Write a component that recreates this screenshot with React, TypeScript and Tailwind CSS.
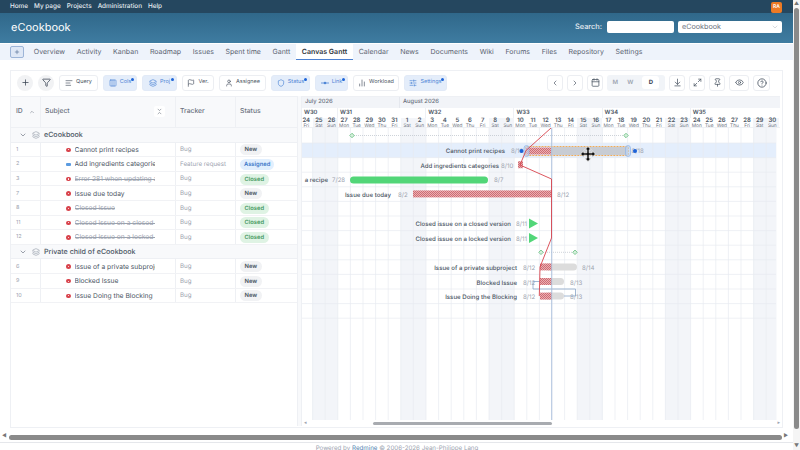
import React from "react";
import {
  ArrowDownToLine,
  Calendar,
  ChartNoAxesColumn,
  ChevronDown,
  ChevronLeft,
  ChevronRight,
  ChevronUp,
  ChevronsDownUp,
  CircleHelp,
  Columns3,
  Eye,
  Flag,
  Funnel,
  Layers,
  AlignLeft,
  Maximize2,
  Pin,
  Plus,
  Shield,
  SlidersHorizontal,
  User,
} from "lucide-react";

const topLinks = ["Home", "My page", "Projects", "Administration", "Help"];
const tabs = ["Overview", "Activity", "Kanban", "Roadmap", "Issues", "Spent time", "Gantt", "Canvas Gantt", "Calendar", "News", "Documents", "Wiki", "Forums", "Files", "Repository", "Settings"];

type Row = { id?: string; subject: string; tracker?: string; status?: string; closed?: boolean; group?: boolean };

const rows: Row[] = [
  { subject: "eCookbook", group: true },
  { id: "1", subject: "Cannot print recipes", tracker: "Bug", status: "New" },
  { id: "2", subject: "Add ingredients categories", tracker: "Feature request", status: "Assigned" },
  { id: "3", subject: "Error 281 when updating a recipe", tracker: "Bug", status: "Closed", closed: true },
  { id: "7", subject: "Issue due today", tracker: "Bug", status: "New" },
  { id: "8", subject: "Closed issue", tracker: "Bug", status: "Closed", closed: true },
  { id: "11", subject: "Closed issue on a closed version", tracker: "Bug", status: "Closed", closed: true },
  { id: "12", subject: "Closed issue on a locked version", tracker: "Bug", status: "Closed", closed: true },
  { subject: "Private child of eCookbook", group: true },
  { id: "6", subject: "Issue of a private subproject", tracker: "Bug", status: "New" },
  { id: "9", subject: "Blocked Issue", tracker: "Bug", status: "New" },
  { id: "10", subject: "Issue Doing the Blocking", tracker: "Bug", status: "New" },
];

const weekdays = ["Fri", "Sat", "Sun", "Mon", "Tue", "Wed", "Thu"];
const days = Array.from({ length: 38 }, (_, i) => ({
  n: i < 8 ? 24 + i : i - 7,
  wd: weekdays[i % 7],
  weekend: i % 7 === 1 || i % 7 === 2,
}));

const COL = 12.6;
const rowY = (i: number) => 135.5 + i * 14.6;

function StatusPill({ status }: { status?: string }) {
  if (status === "Assigned") return <span className="rounded-full bg-[#e1effe] px-[4px] py-[2px] text-[5.8px] font-semibold leading-[7px] text-[#3b78c9]">Assigned</span>;
  if (status === "Closed") return <span className="rounded-full bg-[#dff3e4] px-[4.5px] py-[2px] text-[5.8px] font-semibold leading-[7px] text-[#45985f]">Closed</span>;
  return <span className="rounded-full bg-[#f1f2f4] px-[4.5px] py-[2px] text-[5.8px] font-semibold leading-[7px] text-[#4b5563]">New</span>;
}

function ToolButton({ icon, label, active, w }: { icon: React.ReactNode; label: string; active?: boolean; w: string }) {
  return (
    <div className={`relative flex h-[16px] items-center justify-center gap-[3px] rounded-[3px] border text-[5.5px] ${w} ${active ? "border-[#e2eaf7] bg-[#e4edfa] text-[#4f86d6]" : "border-[#eceef2] bg-white text-[#4b5563]"}`}>
      {icon}
      <span>{label}</span>
      {active && <span className="absolute right-[2px] top-[2px] h-[3px] w-[3px] rounded-full bg-[#1d63d8]" />}
    </div>
  );
}

function IconBox({ children, w = "w-[16px]" }: { children: React.ReactNode; w?: string }) {
  return <div className={`flex h-[16px] items-center justify-center rounded-[3px] border border-[#eceef2] bg-white text-[#4b5563] ${w}`}>{children}</div>;
}

function LinkGlyph() {
  return (
    <svg width="8" height="8" viewBox="0 0 8 8">
      <path d="M0 4h8" stroke="#4f86d6" strokeWidth="0.8" />
      <circle cx="4" cy="4" r="1.3" fill="#4f86d6" />
    </svg>
  );
}

function Label({ x, y, anchor = "end", dark, children }: { x: number; y: number; anchor?: "start" | "end"; dark?: boolean; children: React.ReactNode }) {
  return (
    <text x={x} y={y + 3} textAnchor={anchor} fontSize="6.1" fontWeight={dark ? 500 : 400} fill={dark ? "#4b5563" : "#9ca3af"} fontFamily="Inter, sans-serif">
      {children}
    </text>
  );
}

function Hatch({ x, y, w }: { x: number; y: number; w: number }) {
  return <rect x={x} y={y - 3.5} width={w} height={7} fill="url(#hatch)" />;
}

function Milestone({ x, y }: { x: number; y: number }) {
  return <rect x={x - 1.6} y={y - 1.6} width={3.2} height={3.2} fill="#d6f0dc" stroke="#6cc084" strokeWidth="0.8" transform={`rotate(45 ${x} ${y})`} />;
}

function GanttCanvas() {
  return (
    <svg width="478" height="292" viewBox="302 128 478 292" className="block">
      <defs>
        <pattern id="hatch" width="2" height="2" patternUnits="userSpaceOnUse">
          <rect width="2" height="2" fill="#e9b0b3" />
          <rect width="1" height="1" fill="#cf6b72" />
          <rect x="1" y="1" width="1" height="1" fill="#cf6b72" />
        </pattern>
      </defs>
      {days.map((d, i) =>
        d.weekend ? <rect key={i} x={300 + COL * i} y={128} width={COL} height={294} fill="#f3f5f9" /> : null
      )}
      <rect x={302} y={143} width={474} height={14.6} fill="#e4eefc" />
      {days.map((_, i) => (
        <line key={i} x1={300 + COL * i} x2={300 + COL * i} y1={128} y2={420} stroke="#e8ebf1" strokeWidth="0.7" />
      ))}
      {Array.from({ length: 13 }, (_, i) => (
        <line key={i} x1={302} x2={776} y1={143 + i * 14.6} y2={143 + i * 14.6} stroke="#e8ebf1" strokeWidth="0.7" />
      ))}
      <rect x={776.5} y={128} width={4} height={292} fill="#ffffff" />

      <line x1={352} x2={626} y1={rowY(0)} y2={rowY(0)} stroke="#b9c0c9" strokeWidth="0.7" strokeDasharray="1 1" />
      <Milestone x={352} y={rowY(0)} />
      <Milestone x={626} y={rowY(0)} />
      <line x1={541} x2={575} y1={rowY(8)} y2={rowY(8)} stroke="#b9c0c9" strokeWidth="0.7" strokeDasharray="1 1" />
      <Milestone x={541} y={rowY(8)} />
      <Milestone x={575} y={rowY(8)} />

      {/* row 1 */}
      <rect x={551} y={147} width={77} height={8} fill="#c8ccd3" />
      <Hatch x={526} y={151} w={25} />
      <rect x={525.5} y={146.5} width={103} height={9} rx="1" fill="none" stroke="#f29a2e" strokeWidth="0.8" strokeDasharray="2 1" />
      <rect x={524} y={145.5} width={5} height={11} rx="2.5" fill="#bcd3f3" fillOpacity="0.6" stroke="#8fb4ea" strokeWidth="0.7" />
      <rect x={625.5} y={145.5} width={5} height={11} rx="2.5" fill="#bcd3f3" fillOpacity="0.6" stroke="#8fb4ea" strokeWidth="0.7" />
      <Label x={505} y={rowY(1)} dark>Cannot print recipes</Label>
      <Label x={511} y={rowY(1)} anchor="start">8/10</Label>
      <Label x={631.5} y={rowY(1)} anchor="start">8/18</Label>
      <circle cx={521.5} cy={151} r={2} fill="#1d63d8" />
      <circle cx={635} cy={151} r={2} fill="#1d63d8" />

      {/* row 2 */}
      <Hatch x={518} y={rowY(2)} w={5} />
      <Label x={499} y={rowY(2)} dark>Add ingredients categories</Label>
      <Label x={501} y={rowY(2)} anchor="start">8/10</Label>

      {/* row 3 */}
      <rect x={350} y={176.5} width={138} height={7} rx="3.5" fill="#52d678" />
      <Label x={328} y={rowY(3)} dark>a recipe</Label>
      <Label x={332} y={rowY(3)} anchor="start">7/28</Label>
      <Label x={494} y={rowY(3)} anchor="start">8/7</Label>

      {/* row 4 */}
      <Hatch x={413} y={rowY(4)} w={138} />
      <Label x={391} y={rowY(4)} dark>Issue due today</Label>
      <Label x={398} y={rowY(4)} anchor="start">8/2</Label>
      <Label x={557} y={rowY(4)} anchor="start">8/12</Label>

      {/* closed versions */}
      <polygon points="529,218.5 538,223.5 529,228.5" fill="#52d678" />
      <Label x={511} y={rowY(6)} dark>Closed issue on a closed version</Label>
      <Label x={516} y={rowY(6)} anchor="start">8/11</Label>
      <polygon points="529,233 538,238 529,243" fill="#52d678" />
      <Label x={511} y={rowY(7)} dark>Closed issue on a locked version</Label>
      <Label x={516} y={rowY(7)} anchor="start">8/11</Label>

      {/* private child */}
      <rect x={545} y={263.5} width={32} height={7} rx="3.5" fill="#dcdcdc" />
      <Hatch x={540} y={rowY(9)} w={12} />
      <Label x={517} y={rowY(9)} dark>Issue of a private subproject</Label>
      <Label x={523} y={rowY(9)} anchor="start">8/12</Label>
      <Label x={582} y={rowY(9)} anchor="start">8/14</Label>

      <rect x={545} y={278} width={19} height={7} rx="3.5" fill="#dcdcdc" />
      <Hatch x={540} y={rowY(10)} w={12} />
      <Label x={517} y={rowY(10)} dark>Blocked Issue</Label>
      <Label x={523} y={rowY(10)} anchor="start">8/12</Label>
      <Label x={570} y={rowY(10)} anchor="start">8/13</Label>

      <rect x={545} y={292.5} width={19} height={7} rx="3.5" fill="#dcdcdc" />
      <Hatch x={540} y={rowY(11)} w={12} />
      <Label x={517} y={rowY(11)} dark>Issue Doing the Blocking</Label>
      <Label x={523} y={rowY(11)} anchor="start">8/12</Label>
      <Label x={570} y={rowY(11)} anchor="start">8/13</Label>

      <path d="M540 281.5H533V289H575.5V296H564" fill="none" stroke="#8aa6c8" strokeWidth="0.8" />
      <line x1={551.7} x2={551.7} y1={128} y2={420} stroke="#a9bfdc" strokeWidth="0.9" />
      <path d="M551 128L526 150.5L520 165L551.5 179V238L540 267L539.3 296" fill="none" stroke="#d8434c" strokeWidth="0.9" />

      {/* move cursor */}
      <g transform="translate(588 154)">
        <path d="M0-7.5L3.2-4.2H1.2V-1.2H4.2V-3.2L7.5 0L4.2 3.2V1.2H1.2V4.2H3.2L0 7.5L-3.2 4.2H-1.2V1.2H-4.2V3.2L-7.5 0L-4.2-3.2V-1.2H-1.2V-4.2H-3.2Z" fill="#111111" stroke="#ffffff" strokeWidth="0.8" />
      </g>
    </svg>
  );
}

export default function App() {
  return (
    <div className="relative flex h-[450px] w-[800px] flex-col overflow-hidden bg-white font-['Inter',sans-serif] [text-rendering:geometricPrecision]">
      <div className="flex h-[13px] shrink-0 items-center justify-between bg-[#25475f] pl-[10px] pr-[18px]">
        <div className="flex gap-[6px] pt-[1px] text-[6.4px] font-medium text-[#e6edf2]">
          {topLinks.map((l) => <span key={l}>{l}</span>)}
        </div>
        <div className="mt-[2px] flex h-[11px] w-[11px] items-center justify-center rounded-[2px] bg-[#ee7a24] text-[5px] font-semibold text-white">RA</div>
      </div>
      <div className="flex h-[30px] shrink-0 items-center justify-between bg-gradient-to-b from-[#30688a] to-[#3f7ca1] pb-[2px] pl-[11px] pr-[18px]">
        <span className="text-[11px] text-white">eCookbook</span>
        <div className="flex items-center">
          <span className="mr-[5px] text-[7.4px] font-medium text-[#e6edf2]">Search:</span>
          <div className="mr-[4px] h-[12px] w-[67px] rounded-[2px] bg-white" />
          <div className="flex h-[12px] w-[104px] items-center justify-between rounded-[2px] bg-white pl-[4px] pr-[3px] text-[7.2px] text-[#6b7280]">
            <span>eCookbook</span>
            <ChevronDown size={8} strokeWidth={1.2} className="text-[#9ca3af]" />
          </div>
        </div>
      </div>
      <div className="mt-[1px] flex h-[16px] shrink-0 items-center bg-[#eef3fb] pl-[10px] text-[7px] text-[#5b6472]">
        <div className="mr-[4px] flex h-[12px] w-[14px] items-center justify-center rounded-[2px] border border-[#9db5d8] bg-[#dfe8f6] text-[#33527c]">
          <Plus size={6} strokeWidth={2} />
        </div>
        {tabs.map((t) =>
          t === "Canvas Gantt" ? (
            <span key={t} className="flex h-[16px] items-center border-b border-[#4a7fd0] bg-white px-[5.8px] pt-[1px] font-semibold text-[#2f3640]">{t}</span>
          ) : (
            <span key={t} className="px-[5.8px] pt-[1px]">{t}</span>
          )
        )}
      </div>

      <div className="ml-[10px] mt-[10px] h-[358px] w-[773px] shrink-0 border border-[#eef0f4] bg-white">
        <div className="flex h-[25px] items-center pb-[2px] pl-[6px] pr-[12px]">
          <div className="flex items-center gap-[5px]">
            <div className="flex h-[16px] w-[16px] items-center justify-center rounded-full bg-[#f1f2f4] text-[#374151]"><Plus size={9} /></div>
            <div className="flex h-[16px] w-[16px] items-center justify-center rounded-full bg-[#f1f2f4] text-[#374151]"><Funnel size={9} /></div>
            <ToolButton w="w-[39px]" label="Query" icon={<AlignLeft size={8} />} />
            <ToolButton w="w-[34px]" active label="Cols" icon={<Columns3 size={8} />} />
            <ToolButton w="w-[35px]" active label="Proj" icon={<Layers size={8} />} />
            <ToolButton w="w-[32px]" label="Ver." icon={<Flag size={8} />} />
            <ToolButton w="w-[47px]" label="Assignee" icon={<User size={8} />} />
            <ToolButton w="w-[39px]" active label="Status" icon={<Shield size={8} />} />
            <ToolButton w="w-[33px]" active label="Link" icon={<LinkGlyph />} />
            <ToolButton w="w-[46px]" label="Workload" icon={<ChartNoAxesColumn size={8} />} />
            <ToolButton w="w-[43px]" active label="Settings" icon={<SlidersHorizontal size={8} />} />
          </div>
          <div className="ml-auto flex items-center gap-[4px]">
            <IconBox><ChevronLeft size={8} /></IconBox>
            <IconBox><ChevronRight size={8} /></IconBox>
            <IconBox><Calendar size={9} /></IconBox>
            <div className="flex h-[16px] w-[58px] items-center justify-around rounded-[3px] bg-[#f1f4f8] px-[1px] text-[6px] font-semibold text-[#9ca3af]">
              <span>M</span>
              <span>W</span>
              <span className="flex h-[13px] w-[17px] items-center justify-center rounded-[3px] bg-white font-bold text-[#374151]">D</span>
            </div>
            <IconBox><ArrowDownToLine size={9} /></IconBox>
            <IconBox><Maximize2 size={9} /></IconBox>
            <IconBox><Pin size={9} /></IconBox>
            <IconBox w="w-[20px]"><Eye size={9} /></IconBox>
            <IconBox w="w-[17px]"><CircleHelp size={10} /></IconBox>
          </div>
        </div>

        <div className="flex">
          <div className="w-[286px] shrink-0">
            <div className="flex h-[32px] items-center border-y border-[#eef0f4] bg-[#f8f9fb] text-[6.8px] font-medium text-[#6b7280]">
              <div className="flex h-full w-[30px] items-center gap-[6px] border-r border-[#eef0f4] pb-[1px] pl-[5px]">ID <ChevronUp size={6} /></div>
              <div className="flex h-full w-[135px] items-center justify-between border-r border-[#eef0f4] pb-[1px] pl-[4px] pr-[10px]">
                Subject
                <span className="flex h-[11px] w-[11px] items-center justify-center rounded-[2px] bg-white"><ChevronsDownUp size={7} /></span>
              </div>
              <div className="flex h-full w-[60px] items-center border-r border-[#eef0f4] pb-[1px] pl-[4px]">Tracker</div>
              <div className="pb-[1px] pl-[4px]">Status</div>
            </div>
            {rows.map((r) =>
              r.group ? (
                <div key={r.subject} className="flex h-[14.6px] items-center border-b border-[#eef0f4] bg-[#f8f9fb] pl-[8px] pt-[1px] text-[7.1px] font-medium text-[#4b5563]">
                  <ChevronDown size={8} className="mr-[5px] text-[#6b7280]" />
                  <Layers size={8} className="mr-[4px] text-[#9ca3af]" />
                  {r.subject}
                </div>
              ) : (
                <div key={r.id} className="flex h-[14.6px] items-center border-b border-[#f1f2f5] text-[6.7px]">
                  <div className="flex h-full w-[30px] items-center border-r border-[#eef0f4] pl-[5px] pt-[1px] text-[5.5px] text-[#9ca3af]">{r.id}</div>
                  <div className="flex h-full w-[135px] items-center border-r border-[#eef0f4] pl-[25px] pt-[1px]">
                    {r.tracker === "Bug" ? (
                      <span className="mr-[4px] flex h-[4.5px] w-[4.5px] shrink-0 items-center justify-center rounded-full bg-[#d8434c]"><span className="h-[1.2px] w-[1.2px] rounded-full bg-white" /></span>
                    ) : (
                      <span className="mr-[3.5px] h-[3.5px] w-[5px] shrink-0 rounded-[1px] bg-[#5b9be0]" />
                    )}
                    <span className={`w-[80px] overflow-hidden whitespace-nowrap ${r.closed ? "text-[#9ca3af] line-through" : "text-[#4b5563]"}`}>{r.subject}</span>
                  </div>
                  <div className="flex h-full w-[60px] items-center border-r border-[#eef0f4] pl-[4px] pt-[1px] text-[6.2px] text-[#9ca3af]">{r.tracker}</div>
                  <div className="flex h-full items-center pl-[4px] pt-[1px]"><StatusPill status={r.status} /></div>
                </div>
              )
            )}
          </div>

          <div className="w-[5px] shrink-0 border-x border-[#eef0f4] bg-[#f8f9fb]" />

          <div className="w-[478px] shrink-0">
            <div className="h-[32px] w-[478px] overflow-hidden border-y border-[#eef0f4]">
              <div className="flex h-[11px] bg-[#f2f4f8] text-[5.8px] font-medium leading-[10px] text-[#6b7280]">
                <span className="w-[98px] border-r border-[#e5e8ee] pl-[3px]">July 2026</span>
                <span className="pl-[3px]">August 2026</span>
              </div>
              <div className="flex h-[10px] text-[5.8px] font-semibold leading-[10px] text-[#4b5563]">
                <span className="w-[36px] shrink-0 border-r border-[#eef0f4] pl-[2px]">W30</span>
                <span className="w-[88.2px] shrink-0 border-r border-[#eef0f4] pl-[2px]">W31</span>
                <span className="w-[88.2px] shrink-0 border-r border-[#eef0f4] pl-[2px]">W32</span>
                <span className="w-[88.2px] shrink-0 border-r border-[#eef0f4] pl-[2px]">W33</span>
                <span className="w-[88.2px] shrink-0 border-r border-[#eef0f4] pl-[2px]">W34</span>
                <span className="pl-[2px]">W35</span>
              </div>
              <div className="ml-[-2px] flex h-[11px]">
                {days.map((d, i) => (
                  <div key={i} className={`flex h-[11px] w-[12.6px] shrink-0 flex-col items-center ${d.weekend ? "bg-[#f3f5f9]" : ""}`}>
                    <span className="text-[6px] font-semibold leading-[6px] text-[#4b5563]">{d.n}</span>
                    <span className="text-[4.8px] leading-[5px] text-[#6b7280]">{d.wd}</span>
                  </div>
                ))}
              </div>
            </div>
            <GanttCanvas />
            <div className="flex h-[6px] items-center">
              <span className="ml-[2px] text-[5px] leading-[6px] text-[#9ca3af]">◂</span>
              <div className="ml-[66px] h-[3px] w-[179px] rounded-full bg-[#a8abb0]" />
              <span className="ml-auto text-[5px] leading-[6px] text-[#9ca3af]">▸</span>
            </div>
          </div>
        </div>
      </div>

      <div className="mt-[14px] w-[794px] shrink-0 border-t border-[#e5e7eb] pt-[1.5px] text-center text-[6.2px] leading-[8px] text-[#9ca3af]">
        Powered by <span className="text-[#4f7fb0]">Redmine</span> © 2006-2026 Jean-Philippe Lang
      </div>

      {/* browser scrollbars */}
      <div className="absolute bottom-0 right-0 top-0 flex w-[7px] flex-col items-center bg-[#f5f5f5]">
        <span className="text-[5px] leading-[8px] text-[#777777]">▲</span>
        <div className="h-[421px] w-[5px] rounded-full bg-[#8a8a8a]" />
        <span className="mt-auto text-[5px] leading-[8px] text-[#777777]">▼</span>
      </div>
      <div className="absolute bottom-[10px] left-0 flex h-[6px] w-[793px] items-center bg-white">
        <span className="ml-[2px] text-[5px] text-[#777777]">◀</span>
        <div className="ml-[2px] h-[5px] w-[773px] rounded-full bg-[#8a8a8a]" />
        <span className="ml-[2px] text-[5px] text-[#777777]">▶</span>
      </div>
    </div>
  );
}
